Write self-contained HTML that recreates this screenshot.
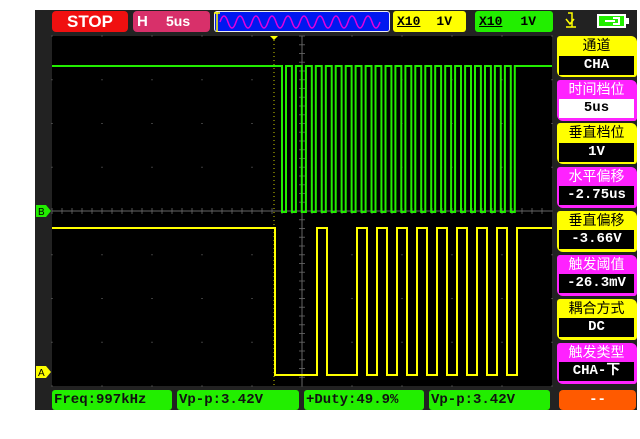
<!DOCTYPE html>
<html><head><meta charset="utf-8"><style>
body{margin:0;width:640px;height:439px;background:#fff;overflow:hidden;position:relative;font-family:"Liberation Mono","Noto Sans CJK SC",monospace}
.a{position:absolute;box-sizing:border-box}
.fr{position:absolute;left:557px;width:80px;height:41px;border-radius:3px 6px 3px 6px}
.lbl{font-family:"Liberation Sans","Noto Sans CJK SC",sans-serif;font-size:14px;text-align:center;line-height:19px}
.val{background:#000;color:#fff;font-family:"Liberation Mono",monospace;font-size:14px;text-align:center;line-height:19px;font-weight:bold}
.m{background:#22ee00;color:#111;font-size:14px;font-weight:bold;line-height:20px;padding-left:2px;border-radius:3px;height:20px;top:390px;white-space:nowrap}
</style></head><body>
<div class="a" style="left:35px;top:10px;width:602px;height:400px;background:#222"></div>
<div class="a" style="left:52px;top:11px;width:76px;height:21px;background:#f01010;color:#fff;font:bold 17px 'Liberation Sans',sans-serif;text-align:center;line-height:21px;border-radius:4px">STOP</div>
<div class="a" style="left:133px;top:11px;width:77px;height:21px;background:#d8306a;color:#fff;font:bold 15px 'Liberation Sans',sans-serif;line-height:21px;border-radius:4px;padding-left:4px">H <span style="margin-left:14px;font-size:14px">5us</span></div>
<div class="a" style="left:214px;top:11px;width:176px;height:21px;background:#0018f0;border:1px solid #eee;border-radius:3px"></div>
<div class="a" style="left:393px;top:11px;width:73px;height:21px;background:#ffff00;border-radius:3px;font:bold 13px 'Liberation Mono',monospace;line-height:21px;color:#000;padding-left:4px"><u>X10</u><span style="margin-left:16px">1V</span></div>
<div class="a" style="left:475px;top:11px;width:78px;height:21px;background:#22ee00;border-radius:3px;font:bold 13px 'Liberation Mono',monospace;line-height:21px;color:#000;padding-left:4px"><u>X10</u><span style="margin-left:18px">1V</span></div>
<div class="a" style="left:597px;top:14px;width:29px;height:14px;background:#22ee00;border:2px solid #fff"></div>
<div class="a" style="left:626px;top:18px;width:3px;height:6px;background:#fff"></div>
<div class="a" style="left:52px;top:36px;width:500px;height:350px;background:#000"></div>
<svg class="a" style="left:0;top:0" width="640" height="439">
<path d="M220 22 q4 -12 8 0 t8 0 t8 0 t8 0 t8 0 t8 0 t8 0 t8 0 t8 0 t8 0 t8 0 t8 0 t8 0 t8 0 t8 0 t8 0 t8 0 t8 0 t8 0 t8 0" fill="none" stroke="#e000e0" stroke-width="1.5"/>
<path d="M217 12v20M214 13h6" stroke="#ffff00" stroke-width="1.5"/>
<path d="M568 13h4v14h4M566 19l4 5 4-5M566 27h8" stroke="#ffff00" stroke-width="1.5" fill="none"/>
<path d="M605 21h10M613 18h6v6h-6" stroke="#fff" stroke-width="2" fill="none"/>
<g id="grid"></g>
<line x1="52" y1="211" x2="552" y2="211" stroke="#666"/>
<line x1="302" y1="36" x2="302" y2="386" stroke="#666"/>
<line x1="274" y1="40" x2="274" y2="386" stroke="#cc0" stroke-dasharray="1 3"/>
<path d="M270 36h8l-4 4z" fill="#ffff00"/>
<path d="M36 205h10l5 6-5 6h-10z" fill="#22ee00"/><text x="38" y="215" font-size="10" font-family="Liberation Sans" fill="#000">B</text>
<path d="M36 366h10l5 6-5 6h-10z" fill="#ffff00"/><text x="38" y="376" font-size="10" font-family="Liberation Sans" fill="#000">A</text>
<path id="g" fill="none" stroke="#22ee00" stroke-width="2"/>
<path id="y" fill="none" stroke="#ffff00" stroke-width="2"/>
</svg>
<script>
var d="M52 66H282",x=282;
for(var i=0;i<24;i++){d+="V212H"+(x+4).toFixed(1)+"V66H"+(x+9.9).toFixed(1);x+=9.95;}
d+="V66H552";document.getElementById('g').setAttribute('d',d);
var y="M52 228H275V375H317V228H327V375H357";
for(var p=357;p<517;p+=20){y+="V228H"+(p+10)+"V375H"+(p+20);}
y+="V228H552";document.getElementById('y').setAttribute('d',y);
var g="";for(var gx=52;gx<=552;gx+=50)for(var gy=36;gy<=386;gy+=43.75){g+='<rect x="'+(gx-0.5)+'" y="'+(gy-0.5)+'" width="1" height="1" fill="#777"/>';}
for(var t=52;t<552;t+=10){g+='<line x1="'+t+'" y1="208" x2="'+t+'" y2="214" stroke="#555"/>';}
for(var t=36;t<386;t+=8.75){g+='<line x1="299" y1="'+t+'" x2="305" y2="'+t+'" stroke="#555"/>';}
document.getElementById('grid').innerHTML=g;
</script>
<div class="fr" style="top:36px;background:#ffff00"></div>
<div class="a lbl" style="left:557px;top:36px;width:79px;height:19px;color:#000">通道</div>
<div class="a val" style="left:559px;top:56px;width:75px;height:19px">CHA</div>
<div class="fr" style="top:80px;background:#ff22ff"></div>
<div class="a lbl" style="left:557px;top:80px;width:79px;height:19px;color:#fff">时间档位</div>
<div class="a val" style="left:559px;top:99px;width:75px;height:19px;background:#fff;color:#000">5us</div>
<div class="fr" style="top:123px;background:#ffff00"></div>
<div class="a lbl" style="left:557px;top:123px;width:79px;height:19px;color:#000">垂直档位</div>
<div class="a val" style="left:559px;top:143px;width:75px;height:19px">1V</div>
<div class="fr" style="top:167px;background:#ff22ff"></div>
<div class="a lbl" style="left:557px;top:167px;width:79px;height:19px;color:#fff">水平偏移</div>
<div class="a val" style="left:559px;top:186px;width:75px;height:19px">-2.75us</div>
<div class="fr" style="top:211px;background:#ffff00"></div>
<div class="a lbl" style="left:557px;top:211px;width:79px;height:19px;color:#000">垂直偏移</div>
<div class="a val" style="left:559px;top:230px;width:75px;height:19px">-3.66V</div>
<div class="fr" style="top:255px;background:#ff22ff"></div>
<div class="a lbl" style="left:557px;top:255px;width:79px;height:19px;color:#fff">触发阈值</div>
<div class="a val" style="left:559px;top:274px;width:75px;height:19px">-26.3mV</div>
<div class="fr" style="top:299px;background:#ffff00"></div>
<div class="a lbl" style="left:557px;top:299px;width:79px;height:19px;color:#000">耦合方式</div>
<div class="a val" style="left:559px;top:318px;width:75px;height:19px">DC</div>
<div class="fr" style="top:343px;background:#ff22ff"></div>
<div class="a lbl" style="left:557px;top:343px;width:79px;height:19px;color:#fff">触发类型</div>
<div class="a val" style="left:559px;top:362px;width:75px;height:19px;font-family:'Liberation Mono','Noto Sans CJK SC',monospace">CHA-下</div>
<div class="a" style="left:559px;top:390px;width:77px;height:20px;background:#ff5a00;border-radius:4px;color:#fff;text-align:center;font:bold 14px 'Liberation Mono';line-height:20px">--</div>
<div class="a m" style="left:52px;width:120px">Freq:997kHz</div>
<div class="a m" style="left:177px;width:122px">Vp-p:3.42V</div>
<div class="a m" style="left:304px;width:120px">+Duty:49.9%</div>
<div class="a m" style="left:429px;width:121px">Vp-p:3.42V</div>
</body></html>
